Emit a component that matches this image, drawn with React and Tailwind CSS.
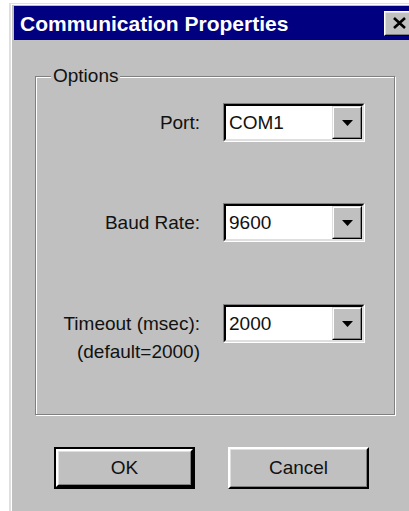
const rows = [
  { label: ["Port:"], value: "COM1", gap: "mt-[16px]" },
  { label: ["Baud Rate:"], value: "9600", gap: "mt-[61px]" },
  { label: ["Timeout (msec):", "(default=2000)"], value: "2000", gap: "mt-[62px]" },
];

function ComboBox({ value }) {
  return (
    <div className="w-[142px] h-[39px] border border-t-[#808080] border-l-[#808080] border-b-white border-r-white">
      <div className="h-full border-2 border-t-black border-l-black border-b-[#dfdfdf] border-r-[#dfdfdf] bg-white flex items-center">
        <span className="flex-1 pl-[3px] leading-none">{value}</span>
        <div className="w-[30px] h-full border border-t-[#dfdfdf] border-l-[#dfdfdf] border-b-black border-r-black">
          <div className="h-full border border-t-white border-l-white border-b-[#808080] border-r-[#808080] bg-[#c0c0c0] flex items-center justify-center">
            <svg width="11" height="6" viewBox="0 0 11 6">
              <path d="M0 0h11L5.5 6z" fill="#000" />
            </svg>
          </div>
        </div>
      </div>
    </div>
  );
}

function Button({ children, isDefault }) {
  return (
    <div className={`w-[141px] h-[42px] ${isDefault ? "border-2 border-black" : ""}`}>
      <div className="h-full border-2 border-t-white border-l-white border-b-black border-r-black">
        <div className="h-full border border-t-[#dfdfdf] border-l-[#dfdfdf] border-b-[#808080] border-r-[#808080] flex items-center justify-center">
          {children}
        </div>
      </div>
    </div>
  );
}

export default function App() {
  return (
    <div className="w-[409px] h-[511px] overflow-hidden bg-white font-['Liberation_Sans',Arial,sans-serif] text-[19px] text-[#111]">
      <div className="ml-[9px] mt-[3px] w-[440px] h-[540px] border-l-2 border-t border-[#dfdfdf]">
        <div className="h-full border-l border-t border-white bg-[#c0c0c0] pl-[2px] pt-px">
          {/* title bar */}
          <div className="h-[34px] bg-[#000080] flex items-center pl-[6px]">
            <span className="text-white font-bold text-[21px] leading-none">Communication Properties</span>
            <div className="ml-[96px] w-[30px] h-[25px] border border-t-white border-l-white border-b-black border-r-black">
              <div className="h-full border border-t-[#dfdfdf] border-l-[#dfdfdf] border-b-[#808080] border-r-[#808080] bg-[#c0c0c0] flex items-center justify-center">
                <svg width="13" height="12" viewBox="0 0 13 12">
                  <path d="M1 1l11 10M12 1L1 11" stroke="#000" strokeWidth="2.6" />
                </svg>
              </div>
            </div>
          </div>

          {/* options group */}
          <fieldset className="ml-[21px] mt-[25px] w-[360px] h-[350px] border border-[#808080] shadow-[inset_1px_1px_0_white,1px_1px_0_white]">
            <legend className="ml-[15px] px-[2px] bg-[#c0c0c0] leading-[22px]">Options</legend>
            {rows.map((row) => (
              <div key={row.value} className={`${row.gap} flex items-start`}>
                <div className="w-[164px] text-right leading-[28px] pt-[6px]">
                  {row.label.map((line) => (
                    <div key={line}>{line}</div>
                  ))}
                </div>
                <div className="ml-[23px]">
                  <ComboBox value={row.value} />
                </div>
              </div>
            ))}
          </fieldset>

          {/* dialog buttons */}
          <div className="mt-[32px] ml-[40px] flex gap-[33px]">
            <Button isDefault>OK</Button>
            <Button>Cancel</Button>
          </div>
        </div>
      </div>
    </div>
  );
}
